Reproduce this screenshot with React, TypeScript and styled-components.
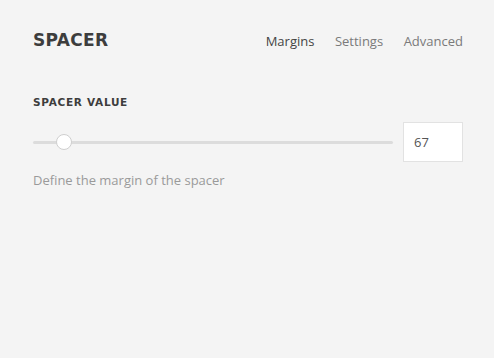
import React, { useState } from "react";
import styled, { createGlobalStyle } from "styled-components";

const GlobalStyle = createGlobalStyle`
	html, body {
		margin: 0;
		padding: 0;
		background: #f4f4f4;
	}
	body {
		font-family: "Open Sans", "Liberation Sans", sans-serif;
	}
`;

const Panel = styled.div`
	width: 494px;
	height: 358px;
	box-sizing: border-box;
	padding: 27px 31px 0 33px;
	background: #f4f4f4;
`;

const Header = styled.div`
	display: flex;
	align-items: center;
	justify-content: space-between;
	height: 28px;
`;

const Title = styled.h1`
	margin: 0 0 2px;
	font-family: "DejaVu Sans", "Liberation Sans", sans-serif;
	font-size: 17px;
	font-weight: 600;
	letter-spacing: 0.3px;
	color: #3d3d3d;
`;

const Tabs = styled.nav`
	display: flex;
	gap: 20.5px;
`;

const Tab = styled.a<{ $active?: boolean }>`
	font-size: 13px;
	color: ${(p) => (p.$active ? "#444" : "#7a7a7a")};
	text-decoration: none;
	cursor: pointer;
`;

const Section = styled.section`
	margin-top: 41px;
`;

const Label = styled.div`
	font-family: "DejaVu Sans", "Liberation Sans", sans-serif;
	font-size: 10.5px;
	font-weight: 700;
	color: #3d3d3d;
	letter-spacing: 0.7px;
`;

const Row = styled.div`
	display: flex;
	align-items: center;
	gap: 10px;
	margin-top: 14px;
`;

const Track = styled.div`
	position: relative;
	flex: 1;
	height: 3px;
	border-radius: 2px;
	background: #dcdcdc;
`;

const Thumb = styled.div`
	position: absolute;
	top: 50%;
	width: 14px;
	height: 14px;
	border-radius: 50%;
	background: #fff;
	border: 1px solid #cfcfcf;
	transform: translate(-50%, -50%);
`;

const NumberBox = styled.input`
	width: 60px;
	height: 40px;
	box-sizing: border-box;
	border: 1px solid #e2e2e2;
	background: #fff;
	padding: 0 10px;
	font-family: "Open Sans", "Liberation Sans", sans-serif;
	font-size: 13px;
	color: #555;
	outline: none;
`;

const Help = styled.p`
	margin: 9px 0 0;
	font-size: 13px;
	color: #9a9a9a;
`;

export default function App() {
	const [value, setValue] = useState("67");
	const thumbX = 31;

	return (
		<>
			<GlobalStyle />
			<Panel>
				<Header>
					<Title>SPACER</Title>
					<Tabs>
						<Tab $active>Margins</Tab>
						<Tab>Settings</Tab>
						<Tab>Advanced</Tab>
					</Tabs>
				</Header>
				<Section>
					<Label>SPACER VALUE</Label>
					<Row>
						<Track>
							<Thumb style={{ left: thumbX }} />
						</Track>
						<NumberBox value={value} onChange={(e) => setValue(e.target.value)} />
					</Row>
					<Help>Define the margin of the spacer</Help>
				</Section>
			</Panel>
		</>
	);
}
